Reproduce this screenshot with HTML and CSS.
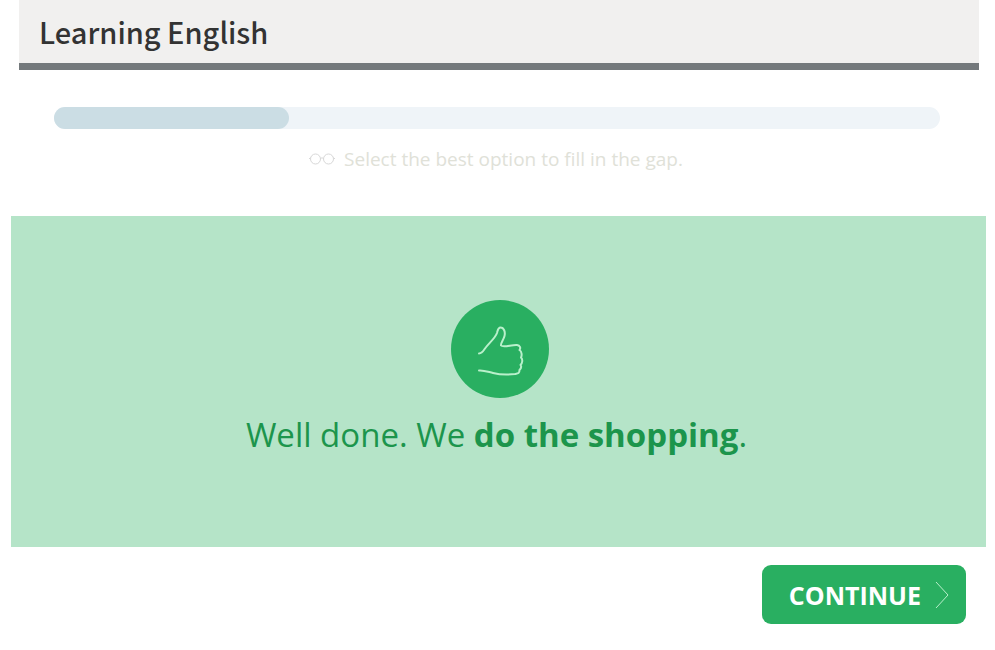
FILE: index.html
```html
<!doctype html>
<html lang="en">
  <head>
    <meta charset="UTF-8" />
    <meta name="viewport" content="width=device-width, initial-scale=1.0" />
    <title>Learning English</title>
    <link rel="stylesheet" href="styles.css">
  </head>
  <body>
    <header class="site-header">
      <h1>Learning English</h1>
    </header>

    <main>
      <div class="progress" role="progressbar" aria-label="Progress" aria-valuemin="0" aria-valuemax="100" aria-valuenow="26">
        <div class="progress-bar" style="width: 26.5%"></div>
      </div>

      <p class="instruction">
        <svg class="glasses" viewBox="0 0 28 14" aria-hidden="true">
          <circle cx="7.500" cy="7" r="5" />
          <circle cx="20.500" cy="7" r="5" />
          <path d="M12.500 6.500Q14 5 15.500 6.500M2.500 5.500L1 7M25.500 5.500L27 7" />
        </svg>
        Select the best option to fill in the gap.
      </p>

      <section class="feedback">
        <div class="badge">
          <svg viewBox="0 0 98 98" aria-hidden="true">
            <path d="M28 53.500C31 53.500 32 51.500 34 48.500C38 43 44 38.500 46 33C47 29.500 47 27.500 49.500 27.500C53 27.500 54.500 32 53.500 36C52.500 40 49.500 43 50 45.500C52 48 61 44.500 66 45C69 45.500 70 48 68.500 50C71 51.500 71 55.500 70 57.500C72 59.500 71.500 63 69.500 65C71 67 69.500 69 68.500 70C68.500 73.500 67 73.500 64 74C56 75 48 74.500 42 73C36 71.500 32 70 28 70.500" />
          </svg>
        </div>
        <p class="message">Well done. We <strong>do the shopping</strong>.</p>
      </section>

      <div class="actions">
        <button class="continue" type="button">
          Continue
          <svg viewBox="0 0 14 28" aria-hidden="true">
            <path d="M1 1l12 13L1 27" />
          </svg>
        </button>
      </div>
    </main>
  </body>
</html>
```
FILE: styles.css
```css
* {
  box-sizing: border-box;
}
body {
  margin: 0;
  background: #fff;
  font-family: 'Open Sans', 'Noto Sans', sans-serif;
}
.site-header {
  margin: 0 16px 0 19px;
  padding: 11px 20px 12px;
  background: #f1f0ef;
  border-bottom: 7px solid #74797c;
}
.site-header h1 {
  margin: 0;
  font-family: 'Source Sans Pro', 'Noto Sans CJK SC', sans-serif;
  font-size: 29px;
  font-weight: 500;
  line-height: 40px;
  color: #333;
}
.progress {
  height: 22px;
  margin: 37px 55px 0 54px;
  border-radius: 11px;
  background: #eff4f8;
}
.progress-bar {
  height: 100%;
  border-radius: 11px;
  background: #cbdde4;
}
.instruction {
  display: flex;
  align-items: center;
  justify-content: center;
  gap: 8px;
  margin: 16px 4px 0 0;
  font-size: 19px;
  line-height: 28px;
  color: #e0e1d8;
}
.glasses {
  width: 28px;
  height: 14px;
  fill: none;
  stroke: #d8d8d8;
}
.feedback {
  display: flex;
  flex-direction: column;
  align-items: center;
  margin: 43px 9px 0 11px;
  padding: 84px 20px 86px;
  background: #b5e4c8;
}
.badge {
  width: 98px;
  height: 98px;
  margin-left: 2px;
  border-radius: 50%;
  background: #29af61;
}
.badge svg {
  display: block;
  fill: none;
  stroke: #b9f0cb;
  stroke-width: 2;
  stroke-linecap: round;
  stroke-linejoin: round;
}
.message {
  margin: 11px 4px 0 0;
  font-size: 33px;
  line-height: 52px;
  color: #1c954c;
}
.message strong {
  font-weight: 700;
}
.actions {
  display: flex;
  justify-content: flex-end;
  padding: 18px 29px;
}
.continue {
  display: flex;
  align-items: center;
  gap: 14px;
  height: 59px;
  padding: 0 17px 0 27px;
  border: 0;
  border-radius: 9px;
  background: #29af61;
  color: #fff;
  font-family: inherit;
  font-size: 25px;
  font-weight: 700;
  text-transform: uppercase;
}
.continue svg {
  width: 14px;
  height: 28px;
  fill: none;
  stroke: #b9f0cb;
}
```
